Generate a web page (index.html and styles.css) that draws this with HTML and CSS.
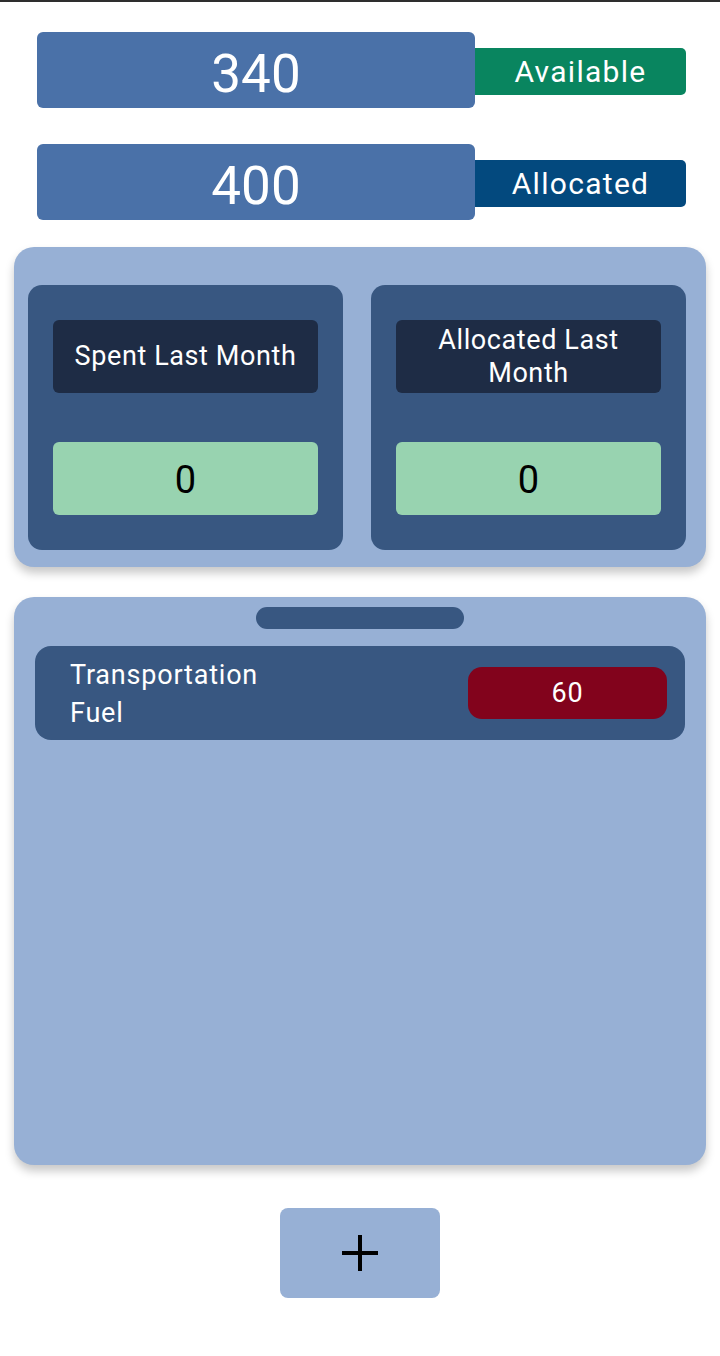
FILE: index.html
```html
<!DOCTYPE html>
<html lang="en">
<head>
<meta charset="utf-8">
<title>Budget</title>
<link rel="stylesheet" href="styles.css">
</head>
<body>
<div class="screen">
  <div class="totals">
    <div class="total-row">
      <div class="total-value">340</div>
      <div class="total-label available">Available</div>
    </div>
    <div class="total-row">
      <div class="total-value">400</div>
      <div class="total-label allocated">Allocated</div>
    </div>
  </div>

  <section class="summary">
    <div class="stat">
      <div class="stat-title">Spent Last Month</div>
      <div class="stat-value">0</div>
    </div>
    <div class="stat">
      <div class="stat-title">Allocated Last Month</div>
      <div class="stat-value">0</div>
    </div>
  </section>

  <section class="sheet">
    <div class="handle"></div>
    <div class="item">
      <div class="item-name">Transportation Fuel</div>
      <div class="item-amount">60</div>
    </div>
  </section>

  <div class="actions">
    <button class="add-btn" type="button" aria-label="Add">
      <svg width="36" height="36" viewBox="0 0 36 36" aria-hidden="true">
        <path d="M18 0 V36 M0 18 H36" stroke="#000" stroke-width="4" fill="none"/>
      </svg>
    </button>
  </div>
</div>
</body>
</html>
```

FILE: styles.css
```css
* {
  box-sizing: border-box;
}

html, body {
  margin: 0;
  padding: 0;
  background: #ffffff;
}

body {
  font-family: Roboto, "Noto Sans", "Liberation Sans", sans-serif;
  border-top: 2px solid #2e2e2e;
}

.screen {
  width: 720px;
  min-height: 1354px;
  display: flex;
  flex-direction: column;
}

.totals {
  display: flex;
  flex-direction: column;
  gap: 36px;
  padding: 30px 0 0 37px;
}

.total-row {
  display: flex;
  align-items: center;
}

.total-value {
  width: 438px;
  height: 76px;
  background: #4a71a8;
  border-radius: 6px;
  color: #ffffff;
  font-size: 53px;
  display: flex;
  align-items: center;
  justify-content: center;
  padding-top: 7px;
}

.total-label {
  width: 211px;
  height: 47px;
  border-radius: 0 5px 5px 0;
  color: #ffffff;
  font-size: 30px;
  letter-spacing: 1.3px;
  display: flex;
  align-items: center;
  justify-content: center;
  margin-top: 3px;
}

.available {
  background: #09855f;
}

.allocated {
  background: #03497e;
}

.summary {
  margin: 27px 14px 0 14px;
  height: 320px;
  background: #97b0d5;
  border-radius: 20px;
  box-shadow: 0 6px 10px rgba(0, 0, 0, 0.22);
  padding: 38px 20px 17px 14px;
  display: flex;
  gap: 28px;
}

.stat {
  width: 315px;
  height: 265px;
  background: #385781;
  border-radius: 14px;
  padding: 35px 25px;
  display: flex;
  flex-direction: column;
  justify-content: space-between;
}

.stat-title {
  height: 73px;
  background: #1e2c45;
  border-radius: 6px;
  color: #ffffff;
  font-size: 27px;
  letter-spacing: 0.6px;
  line-height: 33px;
  text-align: center;
  display: flex;
  align-items: center;
  justify-content: center;
  padding: 0 12px;
}

.stat-value {
  height: 73px;
  background: #98d3b0;
  border-radius: 6px;
  color: #000000;
  font-size: 38px;
  display: flex;
  align-items: center;
  justify-content: center;
  padding-top: 2px;
}

.sheet {
  margin: 30px 14px 0 14px;
  height: 568px;
  background: #97b0d5;
  border-radius: 20px;
  box-shadow: 0 6px 10px rgba(0, 0, 0, 0.22);
  padding: 10px 21px 0 21px;
  display: flex;
  flex-direction: column;
}

.handle {
  align-self: center;
  width: 208px;
  height: 22px;
  background: #385781;
  border-radius: 11px;
}

.item {
  margin-top: 17px;
  height: 94px;
  background: #385781;
  border-radius: 16px;
  padding: 0 18px 0 35px;
  display: flex;
  align-items: center;
  justify-content: space-between;
}

.item-name {
  width: 220px;
  color: #ffffff;
  font-size: 27px;
  letter-spacing: 0.8px;
  line-height: 38px;
  padding-top: 2px;
}

.item-amount {
  width: 199px;
  height: 52px;
  background: #82031c;
  border-radius: 14px;
  color: #ffffff;
  font-size: 27px;
  letter-spacing: 0.8px;
  display: flex;
  align-items: center;
  justify-content: center;
}

.actions {
  display: flex;
  justify-content: center;
  padding-top: 43px;
}

.add-btn {
  width: 160px;
  height: 90px;
  border: none;
  border-radius: 8px;
  background: #97b0d5;
  display: flex;
  align-items: center;
  justify-content: center;
  padding: 0;
}

.add-btn svg {
  display: block;
}
```
